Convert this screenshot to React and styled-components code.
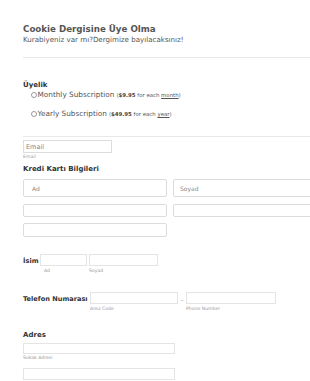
import React from "react";
import styled, { createGlobalStyle } from "styled-components";

const Global = createGlobalStyle`
  html, body { margin: 0; padding: 0; background: #fff; }
  body { font-family: "DejaVu Sans", Verdana, sans-serif; color: #555; overflow: hidden; }
  * { box-sizing: border-box; }
`;

const Page = styled.div`
  width: 310px;
  height: 381px;
  overflow: hidden;
  padding: 24px 0 0 23px;
`;

const Title = styled.h1`
  margin: 0;
  font-size: 8.7px;
  line-height: 10px;
  font-weight: bold;
  color: #555;
`;

const Subtitle = styled.div`
  margin-top: 2px;
  font-size: 7.1px;
  line-height: 8px;
  color: #555;
`;

const Rule = styled.div`
  height: 1px;
  background: #e8e8e8;
  margin-top: ${(p) => p.$top}px;
  margin-right: -10px;
`;

const SectionLabel = styled.div`
  margin-top: ${(p) => p.$top}px;
  font-size: 7px;
  line-height: 9px;
  font-weight: bold;
  color: #333;
`;

const RadioRow = styled.label`
  display: flex;
  align-items: center;
  margin-top: ${(p) => p.$top}px;
  margin-left: 8px;
  font-size: 7.3px;
  line-height: 10px;
  color: #555;
`;

const Circle = styled.span`
  width: 6px;
  height: 6px;
  border: 1px solid #999;
  border-radius: 50%;
  margin-right: 0.5px;
  flex: none;
`;

const Price = styled.span`
  font-size: 5.4px;
  margin-left: 2px;
  color: #555;
  b { color: #444; }
  u { color: #555; }
`;

const Box = styled.div`
  width: ${(p) => p.$w}px;
  height: ${(p) => p.$h}px;
  border: 1px solid ${(p) => (p.$soft ? "#e4e4e4" : "#dcdcdc")};
  border-radius: ${(p) => (p.$r ? 2 : 0)}px;
  background: #fff;
  flex: none;
  display: flex;
  align-items: center;
  padding-left: ${(p) => (p.$pad ? p.$pad : 2)}px;
  font-size: ${(p) => (p.$fs ? p.$fs : 6.5)}px;
  color: #888;
`;

const Sub = styled.div`
  font-size: 4.6px;
  line-height: 6px;
  color: #999;
  margin-left: ${(p) => p.$left || 0}px;
`;

const Row = styled.div`
  display: flex;
  gap: ${(p) => p.$gap}px;
  margin-top: ${(p) => p.$top}px;
`;

const InlineRow = styled.div`
  display: flex;
  align-items: flex-start;
  margin-top: ${(p) => p.$top}px;
`;

const InlineLabel = styled.div`
  width: ${(p) => p.$w}px;
  font-size: 6.6px;
  line-height: 9px;
  font-weight: bold;
  color: #333;
  padding-top: 3px;
  white-space: nowrap;
  flex: none;
`;

const Field = styled.div`
  display: flex;
  flex-direction: column;
  gap: ${(p) => (p.$gap !== undefined ? p.$gap : 2)}px;
  margin-top: ${(p) => p.$top || 0}px;
  margin-left: ${(p) => p.$left || 0}px;
`;

const Dash = styled.span`
  width: 8px;
  text-align: center;
  font-size: 6px;
  color: #777;
  padding-top: 4px;
`;

export default function App() {
  return (
    <Page>
      <Global />
      <Title>Cookie Dergisine Üye Olma</Title>
      <Subtitle>Kurabiyeniz var mı?Dergimize bayılacaksınız!</Subtitle>
      <Rule $top={13} />
      <SectionLabel $top={23}>Üyelik</SectionLabel>
      <RadioRow $top={0}>
        <Circle />
        Monthly Subscription
        <Price>
          (<b>$9.95</b> for each <u>month</u>)
        </Price>
      </RadioRow>
      <RadioRow $top={9}>
        <Circle />
        Yearly Subscription
        <Price>
          (<b>$49.95</b> for each <u>year</u>)
        </Price>
      </RadioRow>
      <Rule $top={17} />
      <Field $gap={1} $top={3}>
        <Box $w={89} $h={13}>Email</Box>
        <Sub>Email</Sub>
      </Field>
      <SectionLabel $top={5}>Kredi Kartı Bilgileri</SectionLabel>
      <Row $gap={6} $top={5}>
        <Box $w={144} $h={18} $r $pad={8} $fs={6}>Ad</Box>
        <Box $w={144} $h={18} $r $pad={6} $fs={6}>Soyad</Box>
      </Row>
      <Row $gap={6} $top={7}>
        <Box $w={144} $h={13} $r />
        <Box $w={144} $h={13} $r />
      </Row>
      <Row $gap={6} $top={6}>
        <Box $w={144} $h={14} $r />
      </Row>
      <InlineRow $top={17}>
        <InlineLabel $w={17}>İsim</InlineLabel>
        <Field>
          <Box $w={47} $h={12} $soft />
          <Sub $left={4}>Ad</Sub>
        </Field>
        <Field $left={2}>
          <Box $w={69} $h={12} $soft />
          <Sub>Soyad</Sub>
        </Field>
      </InlineRow>
      <InlineRow $top={18}>
        <InlineLabel $w={67}>Telefon Numarası</InlineLabel>
        <Field>
          <Box $w={88} $h={12} $soft />
          <Sub>Area Code</Sub>
        </Field>
        <Dash>-</Dash>
        <Field>
          <Box $w={90} $h={12} $soft />
          <Sub>Phone Number</Sub>
        </Field>
      </InlineRow>
      <SectionLabel $top={19}>Adres</SectionLabel>
      <Field $top={3} $gap={1}>
        <Box $w={152} $h={11} $soft />
        <Sub>Sokak Adresi</Sub>
      </Field>
      <Field $top={7}>
        <Box $w={152} $h={12} $soft />
      </Field>
    </Page>
  );
}
